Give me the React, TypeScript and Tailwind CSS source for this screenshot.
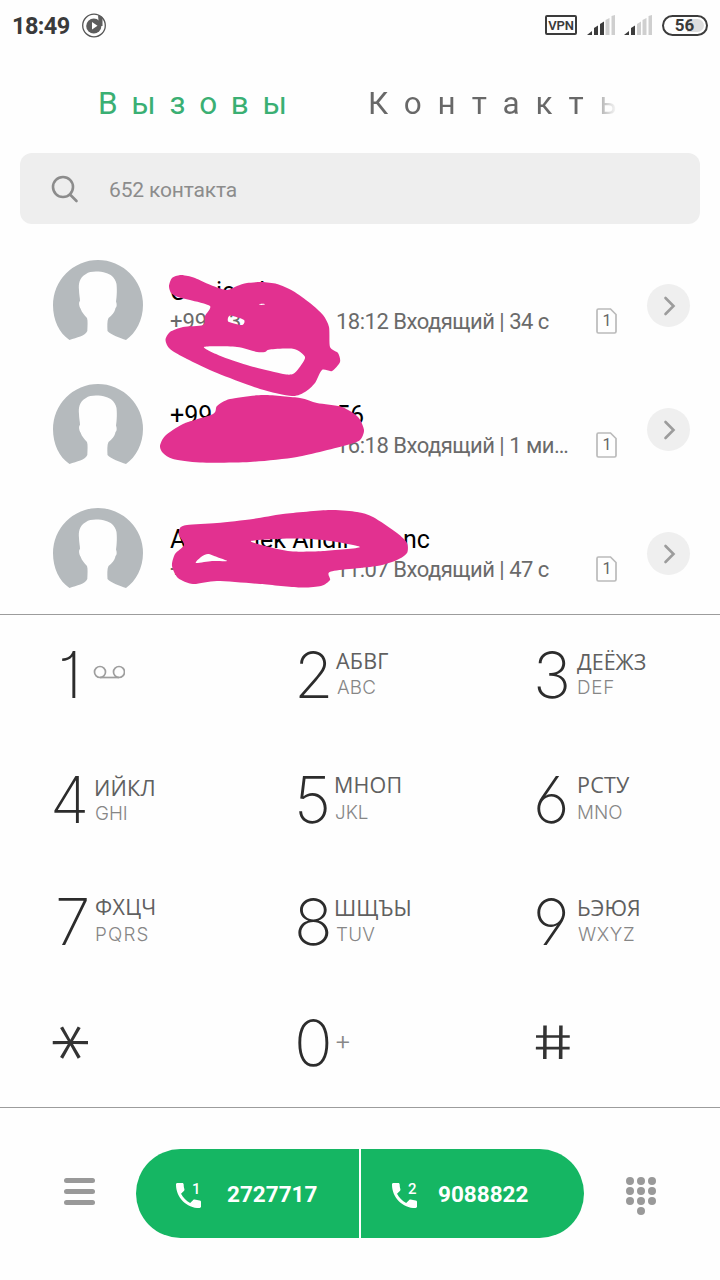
import React from "react";

type Point = [number, number];

// Closed smooth curve through a list of points.
function blob(points: Point[]): string {
  const n = points.length;
  let d = `M${points[0][0]} ${points[0][1]}`;
  for (let i = 0; i < n; i++) {
    const a = points[(i - 1 + n) % n];
    const b = points[i];
    const c = points[(i + 1) % n];
    const e = points[(i + 2) % n];
    d += `C${b[0] + (c[0] - a[0]) / 8} ${b[1] + (c[1] - a[1]) / 8} ${c[0] - (e[0] - b[0]) / 8} ${c[1] - (e[1] - b[1]) / 8} ${c[0]} ${c[1]}`;
  }
  return d + "Z";
}

const SCRIBBLES: Point[][][] = [
  [
    [[169, 286], [172, 278], [180, 275], [188, 276], [195, 278], [213, 286], [227, 290], [237, 286], [247, 283], [262, 282], [277, 284], [293, 291], [310, 303], [323, 315], [329, 327], [330, 347], [338, 353], [340, 362], [332, 371], [322, 370], [315, 383], [305, 392], [292, 396], [260, 389], [217, 373], [187, 359], [170, 349], [165.500, 340], [170, 332], [183, 327], [203, 325], [205, 316], [210, 306], [190, 300], [178, 297], [171, 293]],
    [[204, 347], [237, 347], [257, 352], [265, 352], [270, 349.500], [294, 349], [305, 357], [299, 368], [293, 374], [283, 374], [250, 366], [223, 357]],
    [[228, 318], [231, 315.500], [244, 320], [242, 325], [229, 322]],
    [[259, 304.500], [262, 303.800], [265, 304.300], [262, 305]],
  ],
  [
    [[160, 446], [165, 436], [183, 424], [213, 414], [217, 406], [230, 399], [263, 395], [300, 398], [317, 403], [342, 407], [358, 417], [364, 430], [360, 440], [347, 445], [297, 457], [250, 462], [200, 462.500], [173, 459], [163, 453]],
  ],
  [
    [[179, 535], [180, 528], [187, 525], [217, 523], [253, 519], [283, 514], [330, 510], [357, 512], [373, 517], [397, 533], [407, 543], [407, 553], [397, 560], [377, 566], [331, 571.500], [330, 580], [321, 586], [300, 587.500], [260, 584], [217, 581], [193, 584], [178, 578], [172, 566], [175, 554], [184, 545]],
    [[251, 541], [290, 538.500], [323, 540], [360, 547], [323, 551], [293, 551.500], [273, 548]],
    [[196, 563], [201, 557], [208, 554], [217, 557], [227, 561], [212, 561]],
  ],
];

function Scribbles() {
  return (
    <svg className="pointer-events-none absolute left-0 top-0" width="720" height="615" viewBox="0 0 720 615">
      {SCRIBBLES.map((s, i) => (
        <path key={i} d={s.map(blob).join("")} fill="#e23190" fillRule="evenodd" />
      ))}
    </svg>
  );
}

function Signal({ on }: { on: number }) {
  return (
    <svg width="28" height="21" viewBox="0 0 28 21">
      {["M0 20L5 16V20Z", "M7 20V13L11 10.5V20Z", "M13 20V9L17 6.500V20Z", "M18.500 20V5L22.500 3V20Z", "M24.500 20V1L28 0V20Z"].map((d, i) => (
        <path key={d} d={d} fill={i < on ? "#3c3c3c" : "#cfcfcf"} />
      ))}
    </svg>
  );
}

function StatusBar() {
  return (
    <div className="flex h-[50px] shrink-0 items-center pl-[12px] pr-[12px] text-[#3a3a3a]">
      <span className="mt-[3px] w-[70px] text-[23.5px] font-bold leading-none tracking-[-0.6px]">18:49</span>
      <svg width="25" height="25" viewBox="0 0 25 25">
        <circle cx="12" cy="12.500" r="11.300" fill="none" stroke="#555" strokeWidth="1.300" />
        <circle cx="11.800" cy="13" r="7.600" fill="#5c5c5c" />
        <path d="M16 2L20.500 4V13H17Z" fill="#5c5c5c" />
        <path d="M10 9L15.500 12.800L10 16.500Z" fill="#fff" />
      </svg>
      <div className="flex-1" />
      <div className="flex h-[20px] w-[32px] items-center justify-center rounded-[2px] border-2 border-[#3c3c3c] text-[13px] font-semibold leading-none tracking-[-0.2px]">
        VPN
      </div>
      <div className="ml-[10px] flex gap-[9px]">
        <Signal on={3} />
        <Signal on={2} />
      </div>
      <div className="ml-[10px] flex h-[21px] w-[46px] items-center justify-center rounded-full border-2 border-[#3c3c3c] bg-white p-[2px]">
        <div className="flex h-full w-full items-center justify-center rounded-full bg-[linear-gradient(90deg,#fff_55%,#dedede_55%)] pr-[1px] text-[17px] font-bold leading-none">
          56
        </div>
      </div>
    </div>
  );
}

function Avatar() {
  return (
    <svg className="shrink-0" width="90" height="90" viewBox="0 0 90 90">
      <path
        fill="#b5babd"
        d="M16.500 80C6 73 0 60 0 45A45 45 0 1 1 90 45C90 60 83 73 73 80C67 78 58 75 54.500 71C54.300 66 54 61 55.500 58C59 55 61.500 53 62.500 48C64 47 64 44 63 41.500C64 36 64 28 63.500 24C62 17 57 14 53 13C46 11 37 11 33 14C26 18 25.500 24 26 30C26 34 27 38 27 41C25.500 42 26 46 27.500 48.500C29 53 31.500 55 34 58C35 61 34.500 66 34.300 71C32 76 24 77.500 16.500 80Z"
      />
    </svg>
  );
}

function SimIcon() {
  return (
    <div className="relative h-[26px] w-[22px]">
      <svg width="21" height="26" viewBox="0 0 21 26">
        <path d="M2.500 1H14.500L20 6.500V23.500Q20 25 18.500 25H2.500Q1 25 1 23.500V2.500Q1 1 2.500 1Z" fill="none" stroke="#bababa" strokeWidth="1.700" />
      </svg>
      <span className="absolute inset-0 flex items-center justify-center text-[16px] leading-none text-[#666]">1</span>
    </div>
  );
}

function CallRow({ name, number, info }: { name: React.ReactNode; number: React.ReactNode; info: string }) {
  return (
    <div className="flex h-[124px] shrink-0 items-start pl-[53px]">
      <Avatar />
      <div className="ml-[27px] w-[426px] pt-[15px]">
        <div className="flex h-[32px] items-center whitespace-nowrap pt-px text-[25px] leading-[32px] text-black">{name}</div>
        <div className="flex h-[30px] items-center whitespace-nowrap text-[22px] leading-[30px] text-[#6a6a6a]">
          <div className="flex w-[166px]">{number}</div>
          <span className="tracking-[-0.5px]">{info}</span>
        </div>
      </div>
      <div className="pt-[48px]">
        <SimIcon />
      </div>
      <div className="ml-[29px] mt-[24px] flex h-[43px] w-[43px] items-center justify-center rounded-full bg-[#efefef]">
        <svg width="14" height="22" viewBox="0 0 14 22">
          <path d="M3.500 3L11.500 11L3.500 19" fill="none" stroke="#9c9c9c" strokeWidth="2.600" strokeLinecap="round" />
        </svg>
      </div>
    </div>
  );
}

const DIGIT = "flex h-[47px] shrink-0 items-center font-extralight leading-[47px] text-[#2c2c2c] text-[64px] [font-feature-settings:'cv01','cv03','cv04'] ";

function Key({ digit, cyr, lat, cls, cyrCls, latCls }: { digit: string; cyr: string; lat: string; cls: string; cyrCls: string; latCls: string }) {
  return (
    <div className="flex items-start">
      <span className={DIGIT + cls}>{digit}</span>
      <div className="flex flex-col whitespace-nowrap">
        <span className={"font-['Open_Sans','Noto_Sans',sans-serif] text-[21.500px] font-normal leading-[26px] text-[#606060] " + cyrCls}>{cyr}</span>
        <span className={"text-[18.800px] font-light leading-[26px] text-[#868686] " + latCls}>{lat}</span>
      </div>
    </div>
  );
}

function Phone({ sim }: { sim: string }) {
  return (
    <div className="relative h-[27px] w-[26px]">
      <svg className="absolute left-px top-[3px]" width="25" height="25" viewBox="3 3 18 18">
        <path
          fill="#fff"
          d="M6.620 10.790c1.440 2.830 3.760 5.140 6.590 6.590l2.200-2.200c.27-.27.67-.36 1.020-.24 1.120.37 2.330.57 3.570.57.55 0 1 .45 1 1V20c0 .55-.45 1-1 1-9.390 0-17-7.610-17-17 0-.55.45-1 1-1h3.500c.55 0 1 .45 1 1 0 1.250.2 2.450.57 3.570.11.35.03.74-.25 1.020l-2.200 2.200z"
        />
      </svg>
      <span className="absolute left-[17px] top-[2px] text-[15px] font-medium leading-[14px] text-white">{sim}</span>
    </div>
  );
}

export default function App() {
  return (
    <div className="relative flex h-[1280px] w-[720px] flex-col overflow-hidden bg-[#fefefe] font-[Roboto,sans-serif]">
      <StatusBar />
      <div className="flex h-[103px] shrink-0 items-center pl-[98px] pt-[5px] text-[31.500px] leading-none">
        <span className="w-[270px] tracking-[13.700px] text-[#3aaf73]">Вызовы</span>
        <span className="w-[250px] overflow-hidden whitespace-nowrap bg-[linear-gradient(90deg,#686868_86%,#ffffff_100%)] bg-clip-text leading-[40px] tracking-[15.900px] text-transparent">
          Контакты
        </span>
      </div>
      <div className="mx-[20px] flex h-[71px] shrink-0 items-center rounded-[12px] bg-[#eee] pl-[31px]">
        <svg width="28" height="28" viewBox="0 0 28 28" fill="none" stroke="#8c8c8c" strokeWidth="2.600" strokeLinecap="round">
          <circle cx="12" cy="12" r="10" />
          <path d="M19 19.500L25.500 26" />
        </svg>
        <span className="ml-[30px] mt-[4px] text-[21px] tracking-[-0.15px] text-[#8c8c8c]">652 контакта</span>
      </div>

      <div className="flex h-[390px] shrink-0 flex-col overflow-hidden pt-[36px]">
        <CallRow
          name={<><span className="w-[46px]">C</span><span className="w-[35px]">ic</span><span>d</span></>}
          number={<><span className="w-[59px]">+99</span><span>3</span></>}
          info="18:12 Входящий | 34 с"
        />
        <CallRow
          name={<><span className="w-[166px]">+99</span><span>56</span></>}
          number={<span>+</span>}
          info="16:18 Входящий | 1 ми…"
        />
        <CallRow
          name={<><span className="w-[84px]">A</span><span className="w-[149px]">iek Andii</span><span>nc</span></>}
          number={<span>+</span>}
          info="11:07 Входящий | 47 с"
        />
      </div>

      <div className="grid h-[494px] shrink-0 grid-cols-[245px_238px_237px] grid-rows-[125px_122px_121px_88px] border-y border-[#9c9c9c] pt-[36px] font-[Inter,sans-serif]">
        <div className="flex items-start">
          <span className={DIGIT + "w-[93px] pl-[58px]"}>1</span>
          <svg className="mt-[14px]" width="32" height="14" viewBox="0 0 32 14" fill="none" stroke="#9e9e9e" strokeWidth="1.700">
            <circle cx="7" cy="7" r="5.500" />
            <circle cx="26" cy="7" r="5.500" />
            <path d="M7 12.500H26" />
          </svg>
        </div>
        <Key digit="2" cyr="АБВГ" lat="ABC" cls="w-[91px] pl-[49px]" cyrCls="-mt-[3px] tracking-[0.2px]" latCls="mt-px ml-px tracking-[0.2px]" />
        <Key digit="3" cyr="ДЕЁЖЗ" lat="DEF" cls="w-[94px] pl-[50px]" cyrCls="-mt-[2px]" latCls="tracking-[0.8px]" />
        <Key digit="4" cyr="ИЙКЛ" lat="GHI" cls="w-[94px] pl-[50px]" cyrCls="-mt-px tracking-[0.2px]" latCls="ml-px" />
        <Key digit="5" cyr="МНОП" lat="JKL" cls="w-[89px] pl-[49px]" cyrCls="-mt-[4px] tracking-[0.2px]" latCls="mt-[2px] ml-px" />
        <Key digit="6" cyr="РСТУ" lat="MNO" cls="w-[94px] pl-[50px]" cyrCls="-mt-[4px] tracking-[0.2px]" latCls="mt-[2px]" />
        <Key digit="7" cyr="ФХЦЧ" lat="PQRS" cls="w-[95px] pl-[55px]" cyrCls="-mt-[4px] tracking-[0.3px]" latCls="mt-[2px] tracking-[1.2px]" />
        <Key digit="8" cyr="ШЩЪЫ" lat="TUV" cls="w-[89px] pl-[49px]" cyrCls="-mt-[3px] tracking-[0.1px]" latCls="mt-px ml-[2px] tracking-[0.3px]" />
        <Key digit="9" cyr="ЬЭЮЯ" lat="WXYZ" cls="w-[94px] pl-[50px]" cyrCls="-mt-[3px] tracking-[0.1px]" latCls="mt-px ml-px tracking-[0.6px]" />
        <div className="flex items-start pl-[56px]">
          <span className="flex h-[47px] w-[36px] rotate-90 scale-[1.350] items-center justify-center pt-[26px] text-[64px] font-extralight leading-[47px] text-[#333]">*</span>
        </div>
        <div className="flex items-start pl-[49px]">
          <span className={DIGIT + "w-[40px]"}>0</span>
          <span className="text-[27px] font-light leading-[43px] text-[#888]">+</span>
        </div>
        <div className="flex items-start pl-[52px]">
          <span className="flex h-[47px] w-[36px] scale-x-[1.350] skew-x-[9deg] items-center justify-center text-[46px] font-light leading-[47px] text-[#333]">#</span>
        </div>
      </div>

      <div className="flex flex-1 items-start pt-[41px]">
        <div className="mt-[29px] flex w-[136px] flex-col gap-[6px] pl-[64px]">
          <div className="h-[5px] w-[31px] rounded-full bg-[#999]" />
          <div className="h-[5px] w-[31px] rounded-full bg-[#999]" />
          <div className="h-[5px] w-[31px] rounded-full bg-[#999]" />
        </div>
        <div className="flex h-[89px] w-[448px] gap-[2px] overflow-hidden rounded-full text-[22.500px] font-bold text-white">
          <div className="flex w-[223px] items-center bg-[#15b663] pl-[39px]">
            <Phone sim="1" />
            <span className="ml-[26px] mt-[2px]">2727717</span>
          </div>
          <div className="flex flex-1 items-center bg-[#15b663] pl-[30px]">
            <Phone sim="2" />
            <span className="ml-[21px] mt-[2px]">9088822</span>
          </div>
        </div>
        <svg className="ml-[41px] mt-[27px]" width="32" height="40" viewBox="0 0 32 40" fill="#999">
          {[5, 15, 25].map((y) => [5, 16, 27].map((x) => <circle key={`${x}-${y}`} cx={x} cy={y} r="4" />))}
          <circle cx="16" cy="35" r="4" />
        </svg>
      </div>
      <Scribbles />
    </div>
  );
}
